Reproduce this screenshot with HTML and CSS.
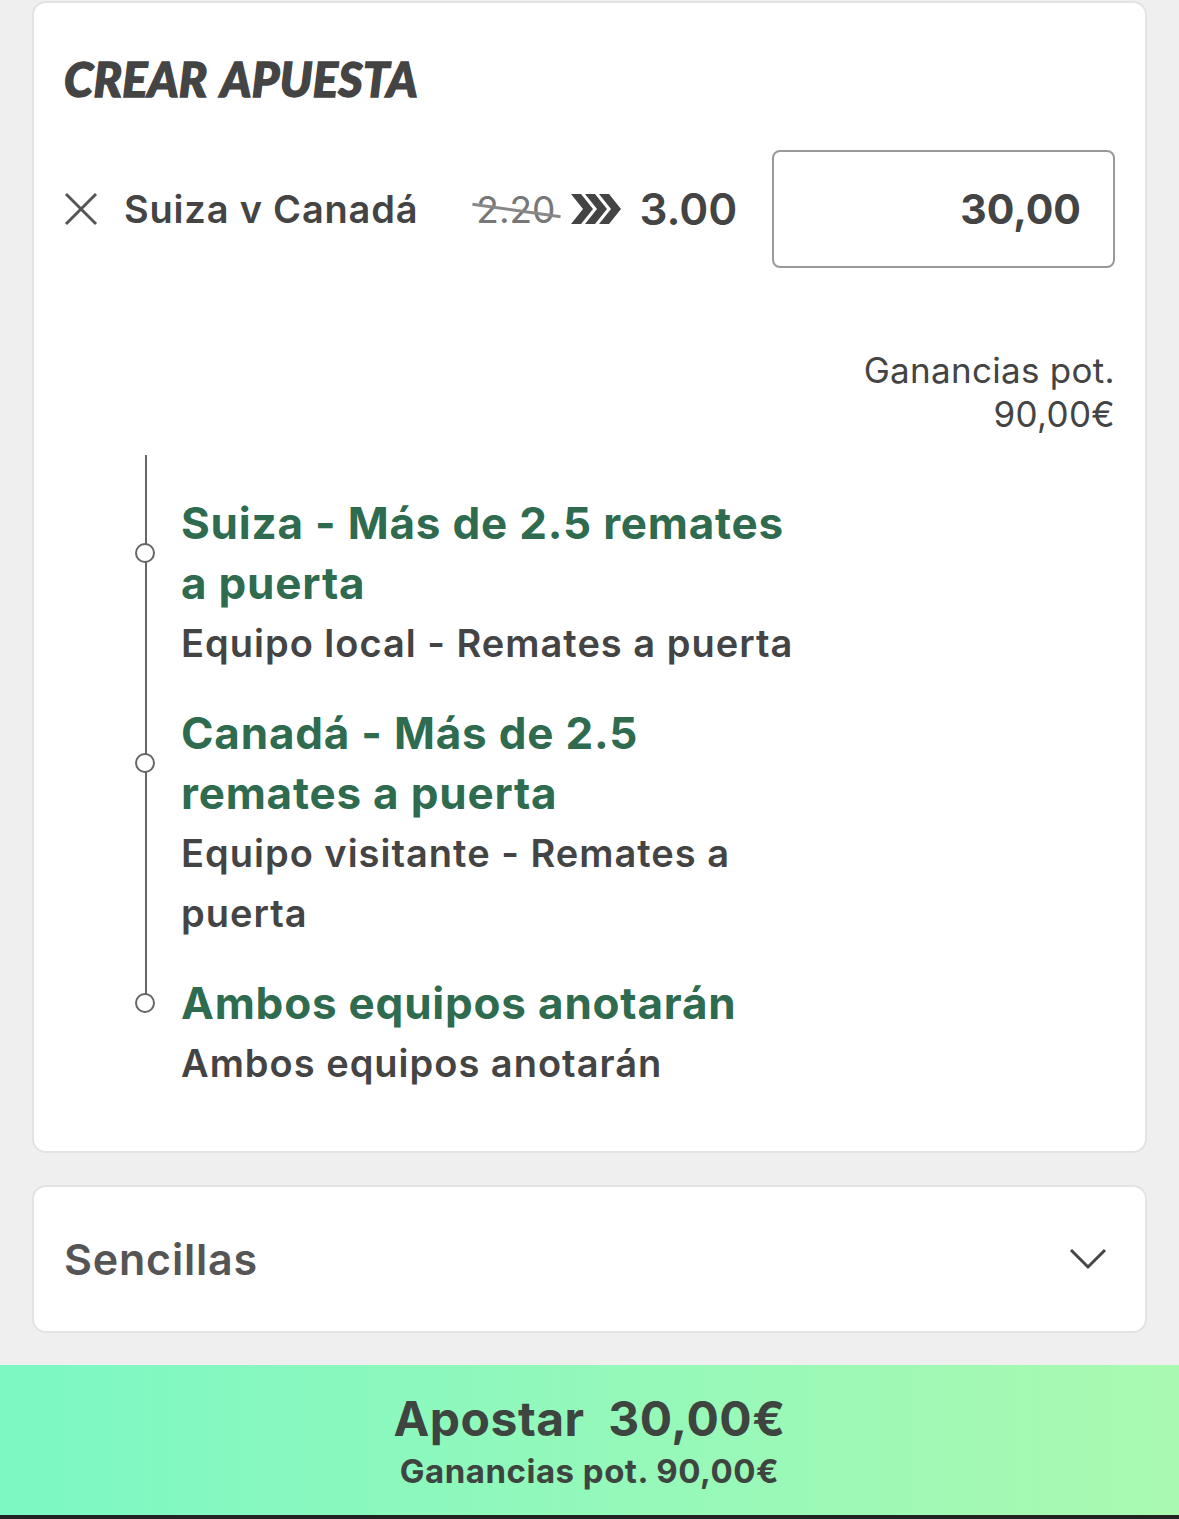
FILE: index.html
```html
<!DOCTYPE html>
<html lang="es">
<head>
  <meta charset="UTF-8">
  <meta name="viewport" content="width=device-width, initial-scale=1.0">
  <title>Crear apuesta</title>

  <link rel="stylesheet" href="styles.css">
</head>
<body>

<main class="slip-page">
  <section class="card slip">
    <h1 class="slip-title">CREAR APUESTA</h1>

    <div class="selection">
      <button class="remove" aria-label="Quitar">
        <svg width="34" height="34" viewBox="0 0 34 34"><path d="M2 2 L32 32 M32 2 L2 32" stroke="#555" stroke-width="3" fill="none"/></svg>
      </button>
      <span class="match">Suiza v Canadá</span>
      <span class="odds-old">2.20</span>
      <svg class="boost" width="50" height="30" viewBox="0 0 50 30">
        <path d="M0 0 H10 L22 15 L10 30 H0 L12 15 Z M14 0 H24 L36 15 L24 30 H14 L26 15 Z M28 0 H38 L50 15 L38 30 H28 L40 15 Z" fill="#444"/>
      </svg>
      <span class="odds-new">3.00</span>
      <div class="stake">30,00</div>
    </div>

    <p class="returns">Ganancias pot.<br>90,00€</p>

    <ol class="legs">
      <li class="leg">
        <div class="leg-name">Suiza - Más de 2.5 remates a puerta</div>
        <div class="leg-market">Equipo local - Remates a puerta</div>
      </li>
      <li class="leg">
        <div class="leg-name">Canadá - Más de 2.5 remates a puerta</div>
        <div class="leg-market">Equipo visitante - Remates a puerta</div>
      </li>
      <li class="leg">
        <div class="leg-name">Ambos equipos anotarán</div>
        <div class="leg-market">Ambos equipos anotarán</div>
      </li>
    </ol>
  </section>

  <section class="card singles">
    <span class="singles-label">Sencillas</span>
    <svg width="38" height="22" viewBox="0 0 38 22"><path d="M2 2 L19 19 L36 2" stroke="#444" stroke-width="3" fill="none"/></svg>
  </section>
</main>

<button class="place-bet">
  <span class="place-main">Apostar&nbsp;&nbsp;30,00€</span>
  <span class="place-sub">Ganancias pot. 90,00€</span>
</button>

</body>
</html>
```

FILE: styles.css
```css
body {
  margin: 0;
  background-color: #efefef;
  font-family: Inter, Roboto, "Liberation Sans", sans-serif;
  color: #444;
}

.slip-page {
  padding: 1px 32px 0;
}

.card {
  background-color: #fff;
  border: 2px solid #e3e3e3;
  border-radius: 14px;
}

.slip {
  padding: 48px 30px 58px;
}

.slip-title {
  margin: 0;
  font-family: Lato, sans-serif;
  font-style: italic;
  font-weight: 900;
  font-size: 47px;
  line-height: 56px;
  color: #444;
  -webkit-text-stroke: 1.4px #444;
  letter-spacing: 0.3px;
  word-spacing: 4px;
}

.selection {
  display: flex;
  align-items: center;
  margin-top: 43px;
}

.remove {
  background: transparent;
  border: none;
  padding: 0;
  width: 34px;
  height: 34px;
  cursor: pointer;
}

.remove svg {
  display: block;
}

.match {
  margin-left: 26px;
  font-size: 38px;
  font-weight: 600;
  letter-spacing: 0.8px;
}

.odds-old {
  position: relative;
  margin-left: 58px;
  font-size: 37px;
  color: #777;
}

.odds-old::after {
  content: "";
  position: absolute;
  left: -4px;
  right: -6px;
  top: 50%;
  height: 3px;
  background-color: #888;
  transform: rotate(8deg);
}

.boost {
  margin-left: 16px;
}

.odds-new {
  margin-left: 18px;
  font-size: 44px;
  font-weight: 600;
}

.stake {
  margin-left: auto;
  width: 343px;
  height: 118px;
  box-sizing: border-box;
  border: 2px solid #999;
  border-radius: 8px;
  padding-right: 32px;
  display: flex;
  align-items: center;
  justify-content: flex-end;
  font-size: 41px;
  font-weight: 700;
}

.returns {
  margin: 80px 0 0;
  text-align: right;
  font-size: 35px;
  line-height: 44px;
  letter-spacing: 0.3px;
  color: #444;
}

.legs {
  position: relative;
  list-style: none;
  margin: 19px 0 0;
  padding: 38px 0 0 117px;
}

.legs::before {
  content: "";
  position: absolute;
  left: 81px;
  top: 0;
  bottom: 90px;
  width: 2px;
  background-color: #666;
}

.leg {
  position: relative;
  width: 620px;
}

.leg + .leg {
  margin-top: 30px;
}

.leg-name {
  position: relative;
  font-size: 44px;
  line-height: 60px;
  font-weight: 700;
  letter-spacing: 0.8px;
  color: #2f6b4f;
}

.leg-name::before {
  content: "";
  position: absolute;
  left: -46px;
  top: 50%;
  width: 16px;
  height: 16px;
  margin-top: -10px;
  border: 2px solid #666;
  border-radius: 50%;
  background-color: #fff;
}

.leg-market {
  font-size: 38px;
  line-height: 60px;
  font-weight: 600;
  letter-spacing: 1px;
  color: #444;
}

.singles {
  margin-top: 32px;
  height: 148px;
  box-sizing: border-box;
  padding: 0 38px 0 30px;
  display: flex;
  align-items: center;
  justify-content: space-between;
}

.singles-label {
  font-size: 43px;
  font-weight: 600;
  letter-spacing: 0.8px;
  color: #555;
}

.place-bet {
  display: flex;
  flex-direction: column;
  align-items: center;
  width: 100%;
  height: 155px;
  margin-top: 32px;
  padding: 26px 0 0;
  border: none;
  border-bottom: 5px solid #222;
  background: linear-gradient(to right, #7cf8c4, #aaf9b0);
  font-family: Inter, Roboto, "Liberation Sans", sans-serif;
  color: #3e4540;
  cursor: pointer;
}

.place-main {
  font-size: 48px;
  font-weight: 700;
  line-height: 56px;
  letter-spacing: 0.5px;
}

.place-sub {
  font-size: 33px;
  font-weight: 700;
  line-height: 40px;
  margin-top: 4px;
  letter-spacing: 0.5px;
}
```
